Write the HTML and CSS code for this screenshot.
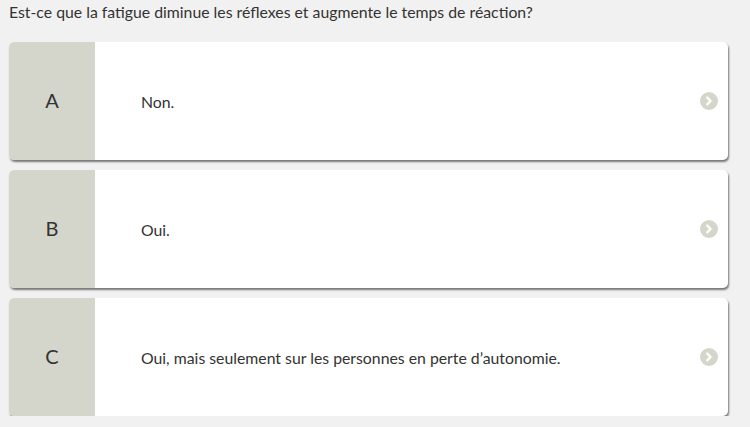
FILE: index.html
```html
<!DOCTYPE html>
<html lang="fr">
<head>
<meta charset="utf-8">
<link rel="stylesheet" href="styles.css">
</head>
<body>
<div class="page">
  <p class="question">Est-ce que la fatigue diminue les réflexes et augmente le temps de réaction?</p>
  <div class="answers">
    <div class="card">
      <div class="letter">A</div>
      <div class="text">Non.</div>
      <span class="go"><svg viewBox="0 0 18 18" width="18" height="18"><circle cx="9" cy="9" r="9" fill="#d4d6cc"/><path d="M7.3 5.6 L10.6 9 L7.3 12.4" fill="none" stroke="#fff" stroke-width="2.4" stroke-linecap="round" stroke-linejoin="round"/></svg></span>
    </div>
    <div class="card">
      <div class="letter">B</div>
      <div class="text">Oui.</div>
      <span class="go"><svg viewBox="0 0 18 18" width="18" height="18"><circle cx="9" cy="9" r="9" fill="#d4d6cc"/><path d="M7.3 5.6 L10.6 9 L7.3 12.4" fill="none" stroke="#fff" stroke-width="2.4" stroke-linecap="round" stroke-linejoin="round"/></svg></span>
    </div>
    <div class="card">
      <div class="letter">C</div>
      <div class="text">Oui, mais seulement sur les personnes en perte d’autonomie.</div>
      <span class="go"><svg viewBox="0 0 18 18" width="18" height="18"><circle cx="9" cy="9" r="9" fill="#d4d6cc"/><path d="M7.3 5.6 L10.6 9 L7.3 12.4" fill="none" stroke="#fff" stroke-width="2.4" stroke-linecap="round" stroke-linejoin="round"/></svg></span>
    </div>
  </div>
</div>
</body>
</html>
```
FILE: styles.css
```css
html, body {
  margin: 0;
  padding: 0;
  background: #f1f1f1;
}
body {
  font-family: Lato, "Open Sans", sans-serif;
  color: #333;
}
.page {
  padding: 0 22px 0 9px;
}
.question {
  margin: 0;
  padding-top: 3px;
  font-size: 15.8px;
  line-height: 18px;
  color: #333;
}
.answers {
  margin-top: 21px;
  display: flex;
  flex-direction: column;
  gap: 10px;
}
.card {
  height: 118px;
  display: flex;
  align-items: center;
  background: #fff;
  border-radius: 5px;
  overflow: hidden;
  box-shadow: 1px 2px 2px rgba(0, 0, 0, 0.5);
}
.letter {
  width: 86px;
  align-self: stretch;
  display: flex;
  align-items: center;
  justify-content: center;
  padding-bottom: 3px;
  box-sizing: border-box;
  background: #d4d6cc;
  font-size: 20px;
  font-weight: 400;
  color: #333;
}
.text {
  flex: 1;
  padding-left: 46px;
  font-size: 15.8px;
  color: #333;
}
.go {
  display: flex;
  margin-right: 10px;
}
```
